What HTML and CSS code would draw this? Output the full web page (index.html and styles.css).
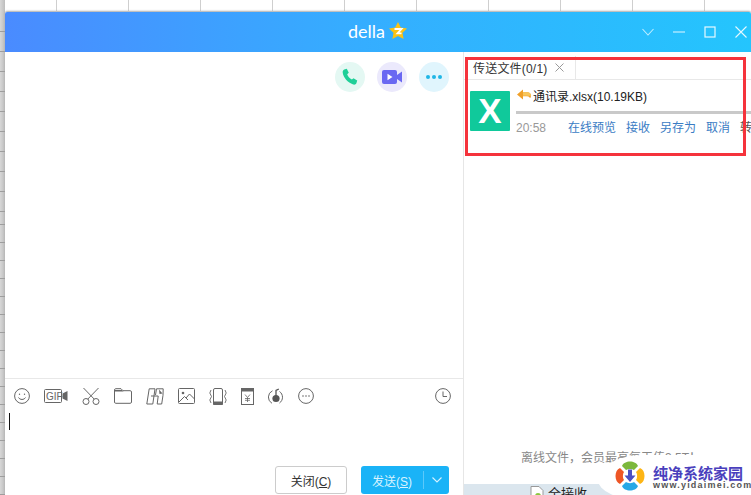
FILE: index.html
```html
<!DOCTYPE html>
<html lang="zh-CN">
<head>
<meta charset="utf-8">
<title>della</title>
<link rel="stylesheet" href="styles.css">
</head>
<body>
<div class="desktop">
  <div class="window">
    <header class="titlebar">
      <div class="title">
        <span class="name">della</span>
        <svg class="star" width="20" height="20" viewBox="0 0 20 20"><path d="M10 1l2.800 5.600 6.200.9-4.500 4.300 1.100 6.200-5.600-2.900-5.600 2.900 1.100-6.200L1 7.500l6.200-.9z" fill="#fbc214"/><path d="M6.500 8h7l-4 4.300h4" fill="none" stroke="#fff" stroke-width="1.800"/></svg>
      </div>
      <div class="controls">
        <svg width="14" height="14" viewBox="0 0 14 14"><path d="M1.500 4L7 10l5.500-6" fill="none" stroke="#bfeeff" stroke-width="1.100"/></svg>
        <svg width="14" height="14" viewBox="0 0 14 14"><path d="M1 7h12" stroke="#e4f8ff" stroke-width="1.200"/></svg>
        <svg width="14" height="14" viewBox="0 0 14 14"><rect x="2" y="2" width="10" height="10" fill="none" stroke="#e4f8ff" stroke-width="1.200"/></svg>
        <svg width="14" height="14" viewBox="0 0 14 14"><path d="M1.500 1.500l11 11M12.500 1.500l-11 11" stroke="#e4f8ff" stroke-width="1.100"/></svg>
      </div>
    </header>
    <div class="body">
      <section class="chat">
        <div class="calls">
          <span class="call call-phone"><svg width="18" height="18" viewBox="0 0 18 18"><path d="M3.200 1.500l2.600-.7 2 4-1.600 1.400c.6 2 2.300 4.200 4.700 5.400l1.600-1.300 3.700 2.300-.8 2.600c-.5 1.200-1.700 1.700-3.200 1.300C6.800 14.800 2.300 9.800 1.700 4.600c-.1-1.400.4-2.500 1.500-3.100z" fill="#1fcf98"/></svg></span>
          <span class="call call-video"><svg width="20" height="14" viewBox="0 0 20 14"><rect x="0" y="0" width="15" height="14" rx="2" fill="#6a68f2"/><path d="M15 5l5-3.500v11L15 9z" fill="#6a68f2"/><path d="M5.500 3.700l5 3.300-5 3.300z" fill="#fff"/></svg></span>
          <span class="call call-more"><i class="dot"></i><i class="dot"></i><i class="dot"></i></span>
        </div>
        <div class="toolbar">
          <svg width="16" height="16" viewBox="0 0 16 16" fill="none" stroke="#666"><circle cx="8" cy="8" r="7.400"/><circle cx="5.500" cy="6.300" r=".7" fill="#666" stroke="none"/><circle cx="10.500" cy="6.300" r=".7" fill="#666" stroke="none"/><path d="M4.500 9.500c1.500 2.600 5.500 2.600 7 0"/></svg>
          <svg width="24" height="16" viewBox="0 0 24 16" fill="none" stroke="#666"><rect x=".5" y="1.500" width="17" height="13" rx="1"/><text x="2" y="11.800" class="gif">GIF</text><path d="M18.500 5.500l5-2.500v10l-5-2.500z" fill="#666" stroke="none"/></svg>
          <svg width="18" height="18" viewBox="0 0 18 18" fill="none" stroke="#666"><circle cx="4" cy="14.500" r="3"/><circle cx="14" cy="14.500" r="3"/><path d="M1.500 1l10.800 11.200M16.500 1L5.700 12.200"/></svg>
          <svg width="18" height="16" viewBox="0 0 18 16" fill="none" stroke="#666"><path d="M.5 14V2c0-.8.5-1.300 1.200-1.300H7l2 2h7.200c.8 0 1.300.5 1.300 1.300v10c0 .8-.5 1.300-1.300 1.300H1.700C1 15.300.5 14.800.5 14z"/><path d="M1 2h7l1.500 1.500H1z" fill="#666" stroke="none"/></svg>
          <svg width="18" height="17" viewBox="0 0 18 17" fill="none" stroke="#666"><path d="M3.200.8h5.800L6.800 16H.8zM10.500.8h6.700l-.2 6.500-1.300 8.700h-4.500l1-8H5"/><path d="M10.500.8L9.500 7"/><path d="M13 1.500l3.500 4-3 .5z" fill="#666" stroke="none"/></svg>
          <svg width="17" height="16" viewBox="0 0 17 16" fill="none" stroke="#666"><rect x=".5" y=".5" width="16" height="15" rx="1"/><circle cx="5" cy="5" r="1.300" fill="#666" stroke="none"/><path d="M1 14l5.500-5.500L10 12M8 10l3.500-4 5 5"/></svg>
          <svg width="18" height="17" viewBox="0 0 18 17" fill="none" stroke="#666"><rect x="4.500" y=".5" width="9" height="16" rx="1.500"/><path d="M4.500 14h9v2.500h-9z" fill="#666"/><path d="M2 2L.8 5 2.500 8.500.8 12 2 15M16 2l1.200 3-1.700 3.500 1.700 3.500L16 15" stroke-width=".9"/></svg>
          <svg width="13" height="17" viewBox="0 0 13 17" fill="none" stroke="#666"><rect x=".5" y=".5" width="12" height="16"/><path d="M.5.500h12V3H.5z" fill="#666"/><path d="M4 6.500l2.500 3 2.500-3M6.500 9.500V14M4 10.500h5M4 12.300h5" stroke-width=".8"/></svg>
          <svg width="16" height="17" viewBox="0 0 16 17" fill="none" stroke="#666"><path d="M4.500 2.800A7 7 0 0 0 4 15.300M11.500 3.500A7 7 0 0 1 11.500 15"/><circle cx="8" cy="10.500" r="3.600" fill="#555" stroke="none"/><path d="M8 9V2.500l2.800-1.500" stroke="#555" stroke-width="1.300"/></svg>
          <svg width="16" height="16" viewBox="0 0 16 16" fill="none" stroke="#666"><circle cx="8" cy="8" r="7.400"/><circle cx="5" cy="8" r=".8" fill="#666" stroke="none"/><circle cx="8" cy="8" r=".8" fill="#666" stroke="none"/><circle cx="11" cy="8" r=".8" fill="#666" stroke="none"/></svg>
          <svg class="clock" width="16" height="16" viewBox="0 0 16 16" fill="none" stroke="#666"><circle cx="8" cy="8" r="7.400"/><path d="M8 3.500V8.500h4"/></svg>
        </div>
        <div class="input"><span class="caret"></span></div>
        <div class="actions">
          <button class="btn btn-close">关闭(<u>C</u>)</button>
          <button class="btn btn-send"><span class="send-label">发送(<u>S</u>)</span><span class="send-arrow"><svg width="10" height="6" viewBox="0 0 10 6"><path d="M.5.500L5 5 9.500.500" fill="none" stroke="#d6f2ff" stroke-width="1.100"/></svg></span></button>
        </div>
      </section>
      <aside class="side">
        <div class="tabs">
          <div class="tab"><span class="tab-label">传送文件(0/1)</span><svg width="9" height="9" viewBox="0 0 9 9"><path d="M.5.500l8 8M8.500.500l-8 8" stroke="#999" stroke-width="1"/></svg></div>
        </div>
        <div class="file">
          <div class="file-icon">X</div>
          <div class="file-info">
            <div class="file-name">
              <svg width="14" height="12" viewBox="0 0 14 12"><path d="M0 5.500L6 .5v2.800h4.500c2 0 3.500 1.400 3.500 3.500 0 1-.4 1.900-1 2.500-.4-1.300-1.300-2-2.800-2H6v3.200z" fill="#f0a029"/><path d="M6 3.300h4.500c2 0 3.500 1.400 3.500 3.500H6z" fill="#f8c65a"/></svg>
              <span>通讯录.xlsx(10.19KB)</span>
            </div>
            <div class="progress"></div>
            <div class="file-actions">
              <span class="time">20:58</span>
              <a class="link">在线预览</a>
              <a class="link">接收</a>
              <a class="link">另存为</a>
              <a class="link">取消</a>
              <a class="link link-dark">转发</a>
            </div>
          </div>
        </div>
        <div class="offline">离线文件，会员最高每天传3.5T！</div>
        <div class="strip">
          <svg width="14" height="16" viewBox="0 0 14 16"><path d="M1 .5h8l4 4v11H1z" fill="#fff" stroke="#999"/><circle cx="8" cy="10" r="3" fill="#8cc63f"/></svg>
          <span>全接收</span>
        </div>
      </aside>
    </div>
  </div>
  <div class="highlight"></div>
  <div class="watermark">
    <svg width="34" height="34" viewBox="0 0 34 34">
      <path d="M9 7c2-6 14-6 16 0l-4 4c-2-1.500-6-1.500-8 0z" fill="#7cb83c"/>
      <path d="M7 9c-6 2-6 14 0 16l4-4c-1.500-2-1.500-6 0-8z" fill="#ee5626"/>
      <path d="M27 9c6 2 6 14 0 16l-4-4c1.500-2 1.500-6 0-8z" fill="#fdb515"/>
      <path d="M9 27c2 6 14 6 16 0l-4-4c-2 1.500-6 1.500-8 0z" fill="#27a8e6"/>
      <path d="M15 10.500h4v6h3.500L17 23l-5.500-6.500H15z" fill="#4b4fc4"/>
    </svg>
    <div class="brand">
      <div class="brand-cn">纯净系统家园</div>
      <div class="brand-en">www.yidaimei.com</div>
    </div>
  </div>
</div>
</body>
</html>
```
FILE: styles.css
```css
* { box-sizing: border-box; }
html, body { margin: 0; padding: 0; }
body { font-family: "Liberation Sans", "Noto Sans CJK SC", sans-serif; font-size: 12px; background: #fff; }

.desktop {
  position: relative;
  width: 751px;
  height: 495px;
  overflow: hidden;
  background:
    linear-gradient(90deg, #d8d8d8, #bdbdbd) 0 0 / 5px 495px no-repeat,
    #fff;
}
.desktop::before {
  content: "";
  position: absolute;
  left: 0; right: 0; top: 0;
  height: 11px;
  background: repeating-linear-gradient(90deg, transparent 0 56px, #cfcfcf 56px 57px, transparent 57px 72px);
}
.desktop::after {
  content: "";
  position: absolute;
  left: 0; top: 0;
  width: 5px;
  height: 495px;
  background:
    repeating-linear-gradient(180deg, transparent 0 11px, #9e9e9e 11px 12px, transparent 12px 20px) 0 20px / 5px 200px no-repeat,
    repeating-linear-gradient(180deg, transparent 0 4px, #9e9e9e 4px 5px, transparent 5px 18px) 0 220px / 5px 275px no-repeat;
}

.window {
  position: absolute;
  left: 5px;
  top: 12px;
  width: 746px;
  height: 483px;
  background: #fff;
  display: flex;
  flex-direction: column;
  overflow: hidden;
  box-shadow: 0 -1px 2px #aaa;
  border-radius: 2px 2px 0 0;
}

.titlebar {
  flex: none;
  position: relative;
  height: 40px;
  background: linear-gradient(90deg, #4a8bff 0%, #36acff 45%, #24c5fd 100%);
  display: flex;
  align-items: center;
  justify-content: center;
  color: #fff;
}
.title { display: flex; align-items: center; gap: 3px; margin-top: -2px; }
.name { font-family: Lato, "Liberation Sans", sans-serif; font-size: 18px; }
.star { display: block; }
.controls {
  position: absolute;
  right: 3px;
  top: 13px;
  display: flex;
  gap: 17px;
}
.controls svg { display: block; }

.body { flex: 1; display: flex; min-height: 0; }

.chat {
  flex: none;
  width: 459px;
  border-right: 1px solid #e6e6e6;
  display: flex;
  flex-direction: column;
}
.calls {
  flex: 1;
  display: flex;
  justify-content: flex-end;
  align-items: flex-start;
  gap: 12px;
  padding: 10px 14px 0 0;
}
.call {
  width: 30px;
  height: 30px;
  border-radius: 50%;
  display: flex;
  align-items: center;
  justify-content: center;
}
.call-phone { background: #e4f8f3; }
.call-video { background: #ebe9fc; }
.call-more { background: #e0f5fd; gap: 2px; }
.dot { width: 4px; height: 4px; border-radius: 50%; background: #1fb6e6; }

.toolbar {
  flex: none;
  height: 35px;
  border-top: 1px solid #e8e8e8;
  display: flex;
  align-items: center;
  gap: 14px;
  padding: 0 12px 0 9px;
}
.toolbar svg { flex: none; display: block; }
.gif { font-family: "Liberation Sans", sans-serif; font-size: 10px; fill: #666; stroke: none; }
.clock { margin-left: auto; }

.input { flex: none; height: 53px; padding: 0 0 0 4px; }
.caret { display: block; width: 1px; height: 17px; background: #111; }

.actions {
  flex: none;
  height: 29px;
  display: flex;
  justify-content: flex-end;
  gap: 14px;
  padding: 0 14px 1px 0;
}
.btn {
  height: 28px;
  padding: 0;
  font-family: inherit;
  font-size: 12px;
  border-radius: 3px;
}
.btn-close {
  width: 72px;
  background: #fff;
  color: #333;
  border: 1px solid #ccc;
}
.btn-send {
  width: 88px;
  background: #1ab3f7;
  color: #d9f3ff;
  border: 0;
  display: flex;
  align-items: center;
}
.send-label { flex: 1; text-align: center; }
.send-arrow {
  flex: none;
  width: 26px;
  height: 18px;
  border-left: 1px solid #5cc9fa;
  display: flex;
  align-items: center;
  justify-content: center;
}
.send-arrow svg { display: block; }

.side { flex: 1; min-width: 0; display: flex; flex-direction: column; overflow: hidden; }
.tabs {
  flex: none;
  margin-top: 4px;
  height: 24px;
  border-bottom: 1px solid #e8e8e8;
  display: flex;
}
.tab {
  width: 112px;
  padding-left: 9px;
  border-right: 1px solid #e8e8e8;
  color: #333;
  display: flex;
  align-items: center;
  gap: 8px;
}
.tab-label { letter-spacing: .2px; }
.file { flex: none; display: flex; gap: 6px; padding: 11px 0 0 6px; }
.file-icon {
  flex: none;
  width: 40px;
  height: 40px;
  background: #10c99b;
  color: #fff;
  font-family: "Liberation Sans", sans-serif;
  font-weight: bold;
  font-size: 35px;
  line-height: 40px;
  text-align: center;
  border-radius: 1px;
}
.file-info { flex: none; width: 260px; }
.file-name { display: flex; align-items: center; gap: 2px; height: 14px; margin-top: -3px; padding-left: 1px; color: #222; white-space: nowrap; }
.file-name svg { flex: none; }
.progress { height: 3px; background: #c9c9c9; margin-top: 9px; }
.file-actions { display: flex; gap: 10px; margin-top: 6px; white-space: nowrap; line-height: 16px; }
.time { color: #999; margin-right: 12px; }
.link { color: #3a7cc4; }
.link-dark { color: #555; }

.offline { flex: none; margin-top: auto; text-align: center; color: #888; line-height: 16px; padding-left: 7px; }
.strip {
  flex: none;
  margin-top: 18px;
  height: 11px;
  background: #dbe6ee;
  display: flex;
  align-items: flex-start;
  gap: 4px;
  padding: 2px 0 0 66px;
  color: #222;
  font-size: 13px;
  line-height: 16px;
  white-space: nowrap;
}
.strip svg { flex: none; }

.highlight {
  position: absolute;
  left: 465px;
  top: 57px;
  width: 281px;
  height: 99px;
  border: 3px solid #f5333c;
}

.watermark {
  position: absolute;
  left: 598px;
  top: 455px;
  width: 160px;
  height: 45px;
  background: #fff;
  border-radius: 45px 0 0 45px / 25px 0 0 20px;
  display: flex;
  align-items: flex-start;
  gap: 6px;
  padding: 4px 0 0 15px;
}
.watermark svg { flex: none; display: block; }
.brand { padding-top: 6px; }
.brand-cn { font-family: "Noto Sans CJK SC", sans-serif; font-weight: 700; font-size: 15px; line-height: 15px; color: #4a3fbd; white-space: nowrap; }
.brand-en { font-family: "Liberation Sans", sans-serif; font-weight: 700; font-size: 9px; letter-spacing: 1.2px; line-height: 11px; color: #555; white-space: nowrap; }
```
